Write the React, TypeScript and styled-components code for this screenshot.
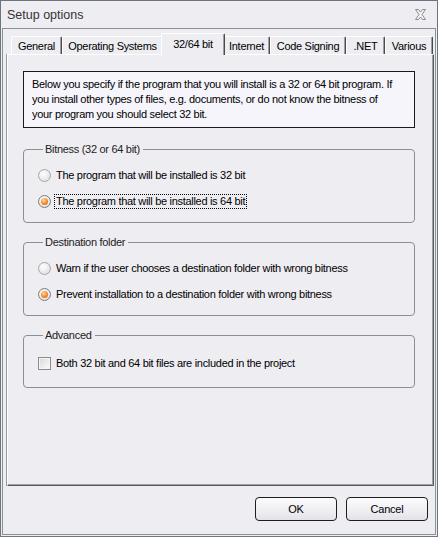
import styled, { createGlobalStyle } from "styled-components";

const GlobalStyle = createGlobalStyle`
    html, body {
        margin: 0;
        padding: 0;
        background: #eeedf2;
    }
    body {
        font-family: "Liberation Sans", Arial, sans-serif;
        font-size: 11px;
        letter-spacing: -0.3px;
        color: #000;
    }
`;

const Window = styled.div`
    width: 438px;
    height: 537px;
    box-sizing: border-box;
    border: 1px solid #6c767c;
    background: #eeedf2;
    display: flex;
    flex-direction: column;
`;

const TitleBar = styled.div`
    height: 27px;
    display: flex;
    align-items: center;
    justify-content: space-between;
    padding: 0 10px 0 6px;
    box-sizing: border-box;
    font-size: 12.5px;
    letter-spacing: 0;
    color: #333;
`;

const CloseButton = styled.div`
    width: 14px;
    height: 12px;
    display: flex;
    align-items: center;
    justify-content: center;
`;

const Client = styled.div`
    flex: 1;
    margin: 0 1px 1px 1px;
    border: 1px solid #8a9296;
    padding: 4px 1px 0 3px;
    display: flex;
    flex-direction: column;
`;

const TabStrip = styled.div`
    display: flex;
    align-items: flex-end;
    height: 21px;
    padding-left: 5px;
    position: relative;
    z-index: 1;
`;

const Tab = styled.div<{ $width: number; $active?: boolean }>`
    box-sizing: border-box;
    width: ${p => p.$width + (p.$active ? 4 : 0)}px;
    margin: ${p => (p.$active ? "0 -2px -1px -2px" : "0")};
    height: ${p => (p.$active ? 22 : 18)}px;
    border-top: 1px solid #fff;
    border-left: 1px solid #fff;
    border-right: 1px solid #4a4a4a;
    box-shadow: inset -1px 0 0 #a0a0a0;
    border-radius: 2px 2px 0 0;
    background: #eeedf2;
    display: flex;
    align-items: ${p => (p.$active ? "flex-start" : "center")};
    padding-top: ${p => (p.$active ? 4 : 0)}px;
    justify-content: center;
    white-space: nowrap;
    font-size: 11px;
    position: relative;
    z-index: ${p => (p.$active ? 2 : 1)};
`;

const Panel = styled.div`
    box-sizing: border-box;
    height: 432px;
    border-top: 1px solid #fff;
    border-left: 1px solid #fff;
    border-right: 1px solid #5c5c5c;
    border-bottom: 1px solid #5c5c5c;
    box-shadow: -1px 0 0 #9a9a9a, inset -1px -1px 0 #a0a0a0;
    margin-left: 1px;
    padding: 16px 18px 0 15px;
    display: flex;
    flex-direction: column;
`;

const InfoBox = styled.div`
    box-sizing: border-box;
    height: 57px;
    border: 1px solid #1a1a1a;
    background: #f5f5fb;
    padding: 5px 8px;
    line-height: 15px;
    font-size: 11px;
    white-space: nowrap;
    margin-bottom: 14px;
`;

const Group = styled.fieldset<{ $top?: number; $bottom?: number }>`
    margin: 0 0 12px 0;
    border: 1px solid #8e8e96;
    border-radius: 4px;
    padding: ${p => p.$top ?? 6}px 0 ${p => p.$bottom ?? 8}px 14px;
    min-width: 0;
`;

const Legend = styled.legend`
    padding: 0 3px 0 2px;
    margin-left: 5px;
    line-height: 14px;
    font-size: 11px;
    color: #222;
`;

const OptionRow = styled.label`
    display: flex;
    align-items: center;
    height: 26px;
    font-size: 11px;
`;

const RadioCircle = styled.span<{ $checked?: boolean }>`
    width: 11px;
    height: 11px;
    border-radius: 50%;
    border: 1px solid ${p => (p.$checked ? "#7d7d7d" : "#a6a6a6")};
    background: radial-gradient(circle at 40% 35%, #ffffff 0%, #e4e4e4 70%, #cfcfcf 100%);
    display: flex;
    align-items: center;
    justify-content: center;
    margin-right: 5px;
    flex-shrink: 0;

    &::after {
        content: "";
        display: ${p => (p.$checked ? "block" : "none")};
        width: 7px;
        height: 7px;
        border-radius: 50%;
        background: radial-gradient(circle at 40% 35%, #ffd9a8 0%, #f38a2a 55%, #c85a10 100%);
    }
`;

const CheckBox = styled.span`
    width: 11px;
    height: 11px;
    border: 1px solid #8c8c8c;
    background: linear-gradient(135deg, #d8d8d8 0%, #eeeeee 60%, #fafafa 100%);
    box-shadow: inset 0 0 0 1px #f4f4f4;
    margin-right: 5px;
    flex-shrink: 0;
`;

const FocusText = styled.span`
    outline: 1px dotted #000;
    outline-offset: 0;
    padding: 0 1px;
    margin-left: -1px;
    line-height: 13px;
`;

const ButtonRow = styled.div`
    display: flex;
    justify-content: flex-end;
    gap: 9px;
    padding: 11px 6px 0 0;
`;

const Button = styled.button`
    width: 82px;
    height: 24px;
    box-sizing: border-box;
    border: 1px solid #1e1e1e;
    border-radius: 4px;
    background: linear-gradient(180deg, #fbfbfd 0%, #eeeef3 60%, #e2e2e8 100%);
    font-family: "Liberation Sans", Arial, sans-serif;
    font-size: 11px;
    letter-spacing: -0.2px;
    color: #000;
    padding: 0;
`;

const tabs = [
    { label: "General", width: 51 },
    { label: "Operating Systems", width: 101 },
    { label: "32/64 bit", width: 60, active: true },
    { label: "Internet", width: 47 },
    { label: "Code Signing", width: 76 },
    { label: ".NET", width: 39 },
    { label: "Various", width: 48 },
];

const App = () => {
    return (
        <>
            <GlobalStyle />
            <Window>
                <TitleBar>
                    <span>Setup options</span>
                    <CloseButton>
                        <svg width="13" height="11" viewBox="0 0 13 11">
                            <path
                                d="M1.5 0.5 H4.5 L6.5 3 L8.5 0.5 H11.5 L8 5.5 L11.5 10.5 H8.5 L6.5 8 L4.5 10.5 H1.5 L5 5.5 Z"
                                fill="#f4f4f4"
                                stroke="#8a8a8a"
                                strokeWidth="1"
                            />
                        </svg>
                    </CloseButton>
                </TitleBar>
                <Client>
                    <TabStrip>
                        {tabs.map(t => (
                            <Tab key={t.label} $width={t.width} $active={t.active}>
                                {t.label}
                            </Tab>
                        ))}
                    </TabStrip>
                    <Panel>
                        <InfoBox>
                            Below you specify if the program that you will install is a 32 or 64 bit program. If
                            <br />
                            you install other types of files, e.g. documents, or do not know the bitness of
                            <br />
                            your program you should select 32 bit.
                        </InfoBox>

                        <Group>
                            <Legend>Bitness (32 or 64 bit)</Legend>
                            <OptionRow>
                                <RadioCircle />
                                The program that will be installed is 32 bit
                            </OptionRow>
                            <OptionRow>
                                <RadioCircle $checked />
                                <FocusText>The program that will be installed is 64 bit</FocusText>
                            </OptionRow>
                        </Group>

                        <Group>
                            <Legend>Destination folder</Legend>
                            <OptionRow>
                                <RadioCircle />
                                Warn if the user chooses a destination folder with wrong bitness
                            </OptionRow>
                            <OptionRow>
                                <RadioCircle $checked />
                                Prevent installation to a destination folder with wrong bitness
                            </OptionRow>
                        </Group>

                        <Group $top={8} $bottom={11}>
                            <Legend>Advanced</Legend>
                            <OptionRow>
                                <CheckBox />
                                Both 32 bit and 64 bit files are included in the project
                            </OptionRow>
                        </Group>
                    </Panel>
                    <ButtonRow>
                        <Button>OK</Button>
                        <Button>Cancel</Button>
                    </ButtonRow>
                </Client>
            </Window>
        </>
    );
};

export default App;
